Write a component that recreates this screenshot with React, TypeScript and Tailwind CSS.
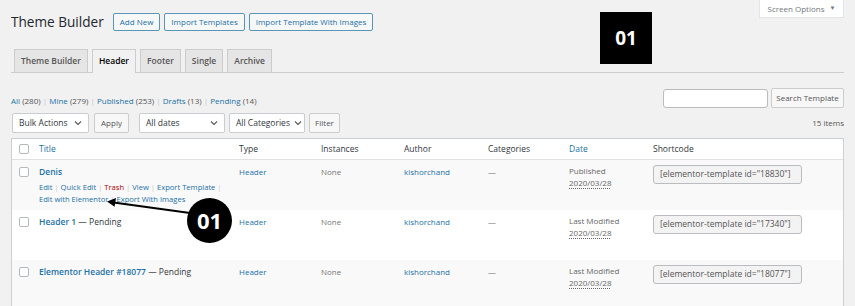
import React from "react";

const link = "text-[#2271a5]";

const Checkbox = () => (
  <span className="inline-block w-[10px] h-[10px] border border-[#b4b9be] rounded-[2px] bg-white" />
);

const Button = ({ label }: { label: string }) => (
  <span className="h-[18px] px-[6px] flex items-center border border-[#5a95b8] rounded-[2px] bg-[#f6f7f7] text-[#2271a5] text-[8px] whitespace-nowrap">
    {label}
  </span>
);

const Select = ({ label, w }: { label: string; w: string }) => (
  <span
    className={`h-[20px] ${w} px-[6px] flex items-center justify-between border border-[#c9cdd1] rounded-[2px] bg-white text-[#32373c] text-[8.5px] whitespace-nowrap`}
  >
    {label}
    <svg width="8" height="6" viewBox="0 0 8 6" className="ml-1 shrink-0">
      <path d="M1 1.5 L4 4.5 L7 1.5" fill="none" stroke="#555" strokeWidth="1.1" />
    </svg>
  </span>
);

const GrayButton = ({ label, cls = "" }: { label: string; cls?: string }) => (
  <span
    className={`h-[20px] px-[6px] flex items-center border border-[#ccc] rounded-[2px] bg-[#f7f7f7] text-[#555] text-[8px] whitespace-nowrap ${cls}`}
  >
    {label}
  </span>
);

const cols = "grid grid-cols-[27px_200px_82px_83px_84px_81px_84px_1fr]";

interface Row {
  title: string;
  pending?: boolean;
  status: string;
  id: string;
  actions?: boolean;
  striped: boolean;
}

const rows: Row[] = [
  { title: "Denis", status: "Published", id: "18830", actions: true, striped: true },
  { title: "Header 1", pending: true, status: "Last Modified", id: "17340", striped: false },
  { title: "Elementor Header #18077", pending: true, status: "Last Modified", id: "18077", striped: true },
];

const Sep = () => <span className="text-[#c8c8c8]">|</span>;

export default function App() {
  return (
    <div
      className="relative w-[855px] h-[306px] overflow-hidden bg-[#f1f1f1] text-[#32373c]"
      style={{ fontFamily: '"Open Sans", "Noto Sans", sans-serif' }}
    >
      <div className="px-[11px]">
        {/* title row */}
        <div className="flex items-start justify-between">
          <div className="flex items-center pt-[13px] gap-[4px]">
            <h1 className="text-[13.6px] leading-[18px] text-[#23282d] mr-[5px] whitespace-nowrap">Theme Builder</h1>
            <Button label="Add New" />
            <Button label="Import Templates" />
            <Button label="Import Template With Images" />
          </div>
          <div className="h-[18px] w-[85px] flex items-center justify-center gap-[5px] bg-white border border-t-0 border-[#e2e4e7] text-[8px] text-[#72777c]">
            Screen Options
            <span className="text-[6px]">▼</span>
          </div>
        </div>

        {/* tabs */}
        <div className="mt-[18px] flex items-end gap-[4px] pl-[3px] border-b border-[#ccc]">
          {["Theme Builder", "Header", "Footer", "Single", "Archive"].map((t) => (
            <span
              key={t}
              className={
                t === "Header"
                  ? "h-[24px] px-[6px] flex items-center border border-b-0 border-[#ccc] bg-[#f1f1f1] text-[8.5px] font-semibold text-[#000] -mb-px whitespace-nowrap"
                  : "h-[23px] px-[6px] flex items-center border border-b-0 border-[#ccc] bg-[#e5e5e5] text-[8.5px] font-semibold text-[#555] whitespace-nowrap"
              }
            >
              {t}
            </span>
          ))}
        </div>

        {/* status + search */}
        <div className="mt-[15px] flex items-end justify-between">
          <div className="text-[8px] text-[#555] mb-[1px] whitespace-nowrap">
            <span className={link}>All</span> (280) <Sep /> <span className={link}>Mine</span> (279) <Sep />{" "}
            <span className={link}>Published</span> (253) <Sep /> <span className={link}>Drafts</span> (13) <Sep />{" "}
            <span className={link}>Pending</span> (14)
          </div>
          <div className="flex items-center gap-[3px]">
            <span className="w-[105px] h-[19px] bg-white border border-[#bbb] rounded-[3px]" />
            <GrayButton label="Search Template" cls="h-[19px] w-[73px] justify-center" />
          </div>
        </div>

        {/* filters */}
        <div className="mt-[5px] flex items-center">
          <Select label="Bulk Actions" w="w-[77px] ml-px" />
          <GrayButton label="Apply" cls="ml-[5px] w-[35px] justify-center text-[8.5px]" />
          <Select label="All dates" w="w-[86px] ml-[10px]" />
          <Select label="All Categories" w="w-[76px] ml-[4px]" />
          <GrayButton label="Filter" cls="ml-[4px] h-[18px] w-[31px] justify-center text-[7.5px]" />
          <span className="ml-auto text-[8px] text-[#555]">15 items</span>
        </div>

        {/* table */}
        <div className="mt-[5px] border border-[#ccd0d4] border-b-0 bg-white">
          <div className={`${cols} h-[21px] items-center border-b border-[#e1e1e1] text-[8.5px] text-[#32373c]`}>
            <span className="pl-[7px] flex">
              <Checkbox />
            </span>
            <span className={link}>Title</span>
            <span>Type</span>
            <span>Instances</span>
            <span>Author</span>
            <span>Categories</span>
            <span className={link}>Date</span>
            <span>Shortcode</span>
          </div>
          {rows.map((r) => (
            <div
              key={r.id}
              className={`${cols} h-[50px] items-start pt-[5px] text-[8px] whitespace-nowrap ${r.striped ? "bg-[#f9f9f9]" : "bg-white"}`}
            >
              <span className="pl-[7px] pt-[2px] flex">
                <Checkbox />
              </span>
              <div className="flex flex-col">
                <span className="text-[8.5px] leading-[13px]">
                  <span className={`${link} font-semibold`}>{r.title}</span>
                  {r.pending && <span className="text-[#32373c]"> — Pending</span>}
                </span>
                {r.actions && (
                  <div className={`${link} text-[7.6px] leading-[12px] mt-[3px]`}>
                    <div>
                      Edit <Sep /> Quick Edit <Sep /> <span className="text-[#a00]">Trash</span> <Sep /> View <Sep /> Export
                      Template <Sep />
                    </div>
                    <div>
                      Edit with Elementor <Sep /> Export With Images
                    </div>
                  </div>
                )}
              </div>
              <span className={`${link} leading-[13px]`}>Header</span>
              <span className="text-[#777] leading-[13px]">None</span>
              <span className={`${link} leading-[13px]`}>kishorchand</span>
              <span className="text-[#777] leading-[13px]">—</span>
              <div className="flex flex-col text-[#666] leading-[12px]">
                <span>{r.status}</span>
                <span className="underline decoration-dotted underline-offset-2">2020/03/28</span>
              </div>
              <span className="w-[149px] h-[19px] flex items-center px-[6px] bg-[#f3f3f3] border border-[#b9bcc0] rounded-[3px] text-[8.5px] text-[#555]">
                [elementor-template id="{r.id}"]
              </span>
            </div>
          ))}
        </div>
      </div>

      {/* annotations */}
      <div className="absolute left-[600px] top-[12px] w-[52px] h-[52px] bg-black flex items-center justify-center text-white text-[19px] font-bold">
        01
      </div>
      <svg className="absolute left-0 top-0 pointer-events-none" width="855" height="306">
        <line x1="190" y1="213" x2="110" y2="202" stroke="#000" strokeWidth="2" />
        <path d="M107 201.6 L116 198 L114.6 206.8 Z" fill="#000" />
      </svg>
      <div className="absolute left-[187px] top-[198px] w-[45px] h-[45px] rounded-full bg-black flex items-center justify-center text-white text-[22px] font-bold">
        01
      </div>
    </div>
  );
}
